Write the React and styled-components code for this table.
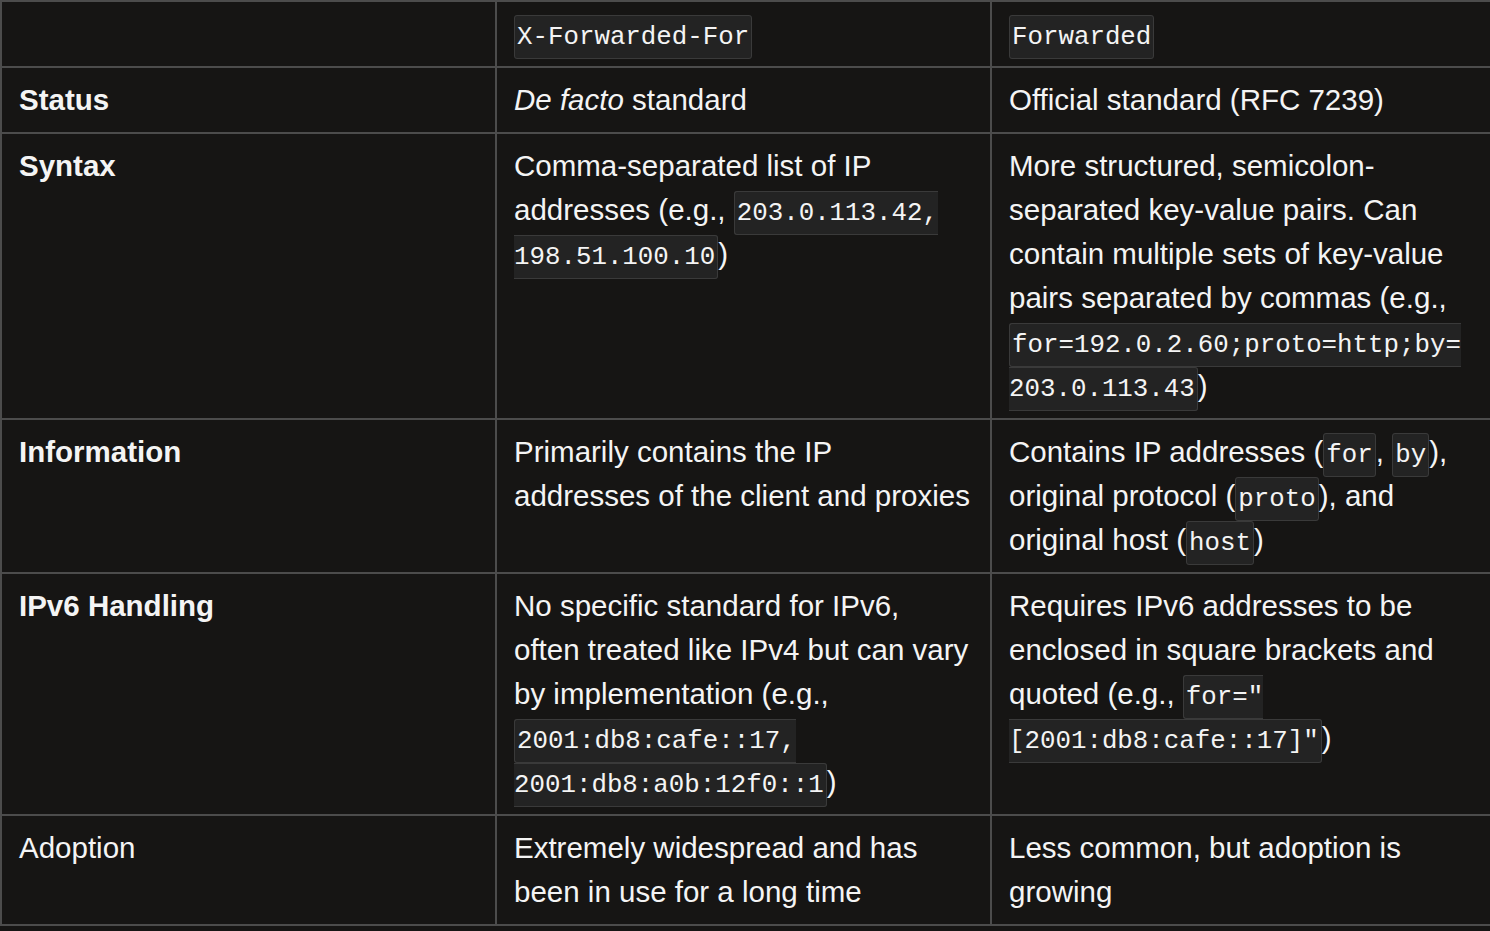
import React from "react";
import styled, { createGlobalStyle } from "styled-components";

const GlobalStyle = createGlobalStyle`
    html, body {
        margin: 0;
        padding: 0;
        background: #161514;
    }
`;

const Page = styled.div`
    width: 1490px;
    height: 931px;
    background: #161514;
    overflow: hidden;
`;

const Table = styled.table`
    width: 1490px;
    table-layout: fixed;
    border-collapse: collapse;
    font-family: "Liberation Sans", Arial, sans-serif;
    font-size: 29.5px;
    line-height: 44px;
    color: #f4f4f4;
`;

const Cell = styled.td`
    border: 2px solid #4c4c4c;
    padding: 10px 17px 10px 17px;
    vertical-align: top;
    overflow-wrap: anywhere;
    font-weight: ${(props) => (props.bold ? 700 : 400)};
`;

const HeadCell = styled.th`
    border: 2px solid #4c4c4c;
    padding: 10px 17px;
    text-align: left;
    font-weight: 400;
    vertical-align: top;
`;

const Code = styled.code`
    font-family: "Liberation Mono", "DejaVu Sans Mono", monospace;
    font-size: 25.8px;
    line-height: 1;
    background: #232323;
    border: 1px solid #3a3a3a;
    border-radius: 3px;
    padding: 7px 2px 6px;
`;

const rows = [
    {
        label: "Status",
        bold: true,
        xff: (
            <>
                <em>De facto</em> standard
            </>
        ),
        fwd: <>Official standard (RFC 7239)</>,
    },
    {
        label: "Syntax",
        bold: true,
        xff: (
            <>
                Comma-separated list of IP addresses (e.g.,{" "}
                <Code>203.0.113.42, 198.51.100.10</Code>)
            </>
        ),
        fwd: (
            <>
                More structured, semicolon-separated key-value pairs. Can
                contain multiple sets of key-value pairs separated by commas
                (e.g., <Code>for=192.0.2.60;proto=http;by=203.0.113.43</Code>)
            </>
        ),
    },
    {
        label: "Information",
        bold: true,
        xff: <>Primarily contains the IP addresses of the client and proxies</>,
        fwd: (
            <>
                Contains IP addresses (<Code>for</Code>, <Code>by</Code>),
                original protocol (<Code>proto</Code>), and original host (
                <Code>host</Code>)
            </>
        ),
    },
    {
        label: "IPv6 Handling",
        bold: true,
        xff: (
            <>
                No specific standard for IPv6, often treated like IPv4 but can
                vary by implementation (e.g.,{" "}
                <Code>2001:db8:cafe::17, 2001:db8:a0b:12f0::1</Code>)
            </>
        ),
        fwd: (
            <>
                Requires IPv6 addresses to be enclosed in square brackets and
                quoted (e.g., <Code>for="[2001:db8:cafe::17]"</Code>)
            </>
        ),
    },
    {
        label: "Adoption",
        bold: false,
        xff: <>Extremely widespread and has been in use for a long time</>,
        fwd: <>Less common, but adoption is growing</>,
    },
];

const App = () => {
    return (
        <Page>
            <GlobalStyle />
            <Table>
                <colgroup>
                    <col style={{ width: 495 }} />
                    <col style={{ width: 495 }} />
                    <col style={{ width: 500 }} />
                </colgroup>
                <thead>
                    <tr>
                        <HeadCell />
                        <HeadCell>
                            <Code>X-Forwarded-For</Code>
                        </HeadCell>
                        <HeadCell>
                            <Code>Forwarded</Code>
                        </HeadCell>
                    </tr>
                </thead>
                <tbody>
                    {rows.map((row) => (
                        <tr key={row.label}>
                            <Cell bold={row.bold}>{row.label}</Cell>
                            <Cell>{row.xff}</Cell>
                            <Cell>{row.fwd}</Cell>
                        </tr>
                    ))}
                </tbody>
            </Table>
        </Page>
    );
};

export default App;
